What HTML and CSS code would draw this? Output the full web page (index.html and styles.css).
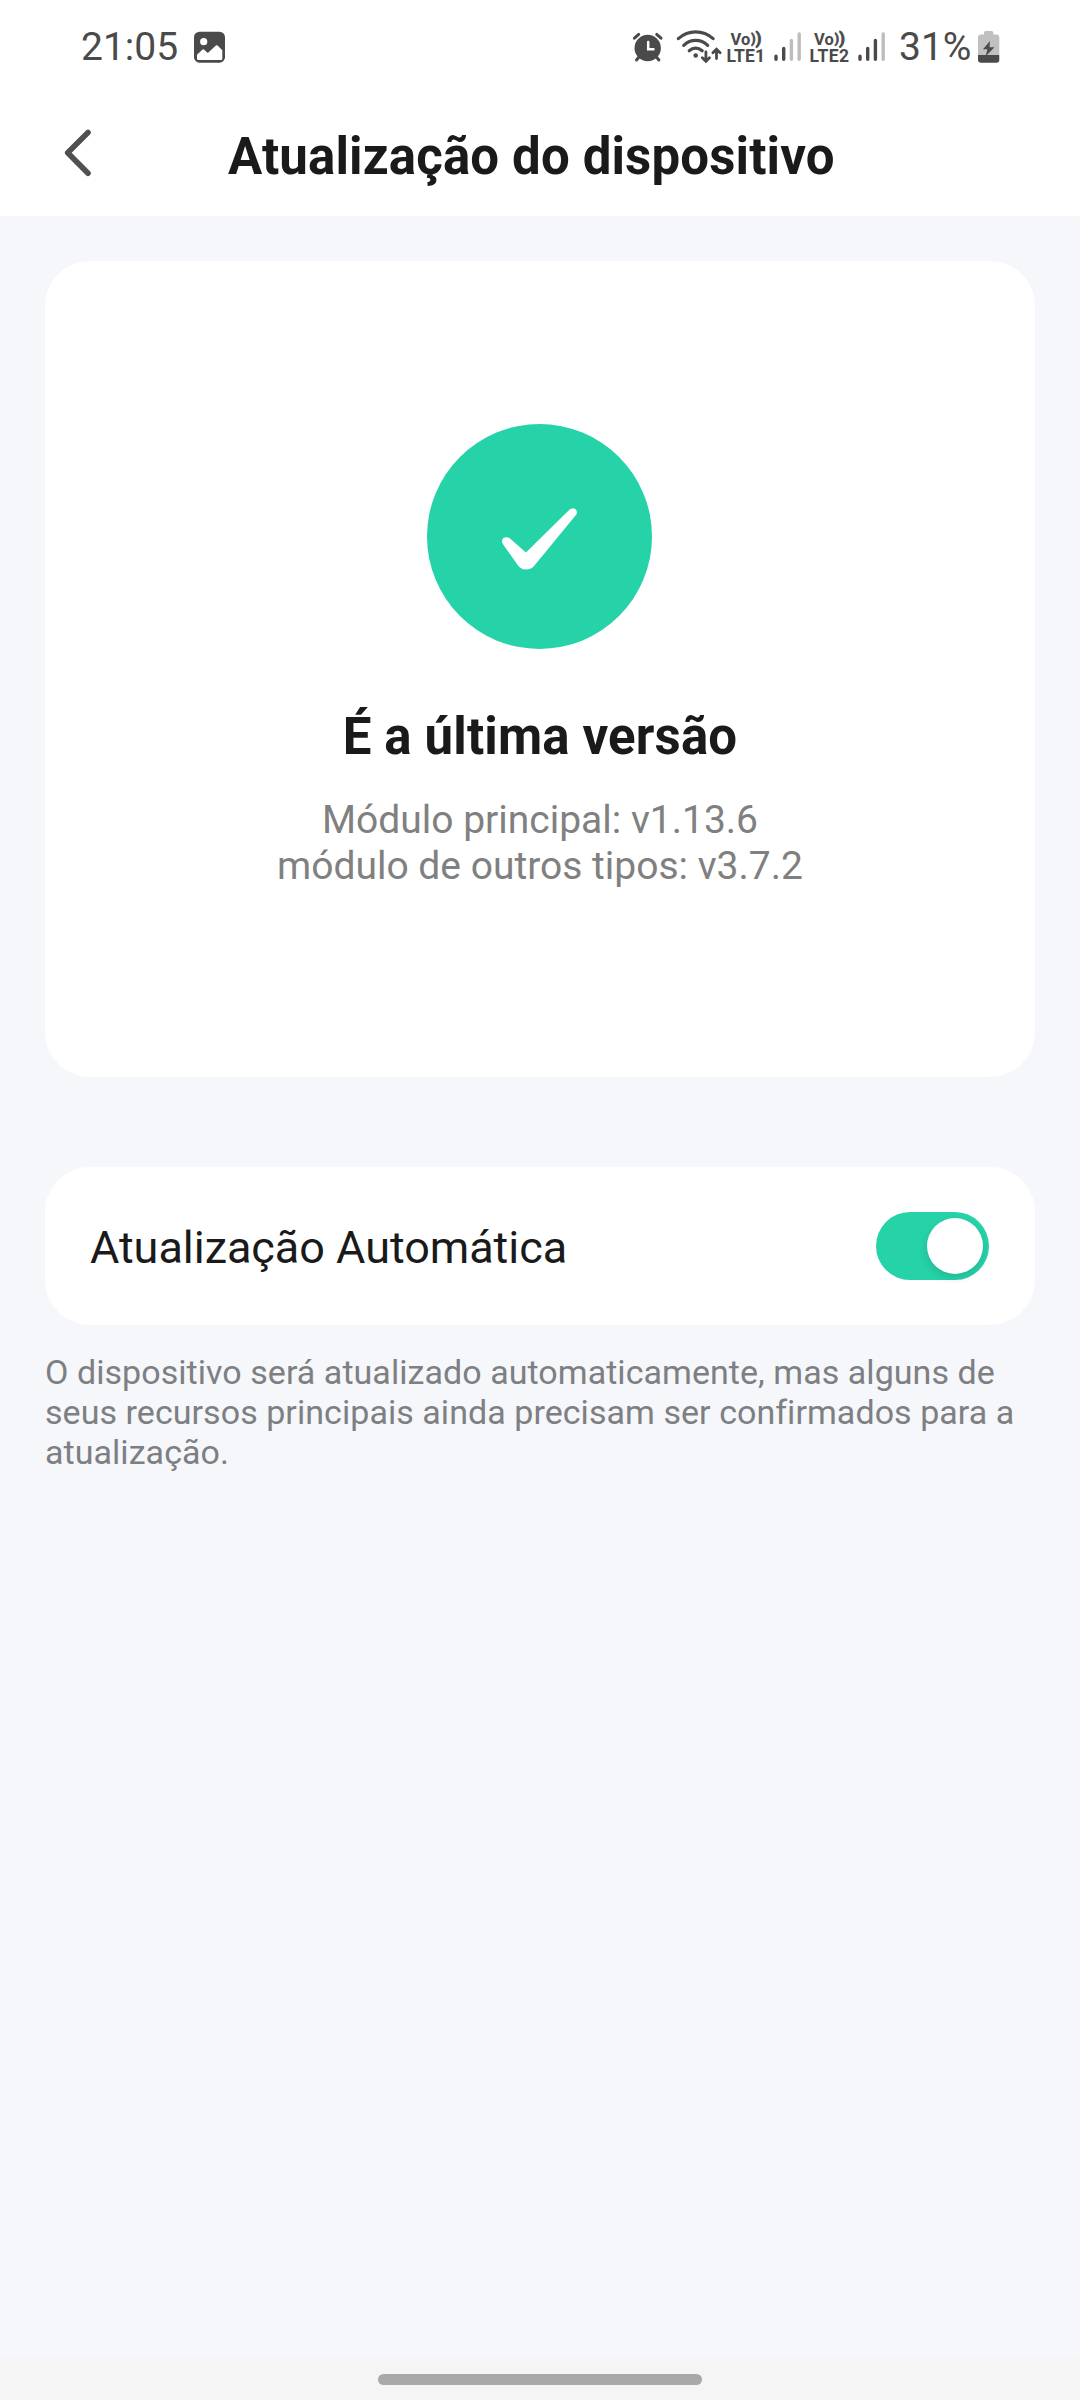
FILE: index.html
```html
<!DOCTYPE html>
<html lang="pt">
<head>
<meta charset="utf-8">
<title>Atualização do dispositivo</title>
<link rel="stylesheet" href="styles.css">
</head>
<body>
<div class="screen">
  <div class="status">
    <span class="clock">21:05</span>
    <svg class="photo" width="32" height="92" viewBox="194 0 32 92">
      <rect x="194" y="31.7" width="31" height="31" rx="5.5" fill="#4a4a4a"/>
      <circle cx="203.7" cy="41.7" r="3.6" fill="#fff"/>
      <path d="M197 54.8L202.6 49.6Q203.4 49 204.2 49.7L207.8 53L215.9 45.5Q216.8 44.8 217.6 45.6L222.3 50.3V58.5Q222.3 60 220.8 60H198.500Q197 60 197 58.500Z" fill="#fff"/>
    </svg>
    <div class="indicators">
      <svg width="40" height="92" viewBox="630 0 40 92" fill="none" stroke="#4a4a4a" stroke-linecap="round">
        <circle cx="647.7" cy="48" r="13.2" fill="#4a4a4a" stroke="none"/>
        <path d="M634.4 38.200L638.700 34.400M661 38.200L656.700 34.400" stroke-width="3"/>
        <path d="M639 57L636.500 60M656.400 57L658.900 60" stroke-width="3"/>
        <path d="M648.200 42V49.200H653.500" stroke="#fff" stroke-width="2.500"/>
      </svg>
      <svg width="54" height="92" viewBox="670 0 54 92" fill="none" stroke="#4a4a4a" stroke-width="3.200" stroke-linecap="round">
        <path d="M678.300 38.600Q686 31.800 695.700 31.800T713.100 38.600M683.700 45.300Q689 40.400 695.700 40.400T707.700 45.300M689.200 50.800Q692.200 48.200 695.700 48.200T702.200 50.800"/>
        <circle cx="695.700" cy="55.500" r="2.300" fill="#4a4a4a" stroke="none"/>
        <path d="M705.900 52V61M702.300 57.800L705.900 61.300L709.500 57.800M716.500 58.500V49.500M712.900 52.700L716.500 49.200L720.100 52.700" stroke-width="2.800"/>
      </svg>
      <svg class="volte" width="44" height="92" viewBox="724 0 44 92">
        <text x="730.500" y="44.500" font-size="16.500">Vo<tspan class="wave" x="751.300" y="42.500" font-size="12">)</tspan><tspan class="wave" x="755.500" y="44" font-size="17">)</tspan></text>
        <text x="726.500" y="62" font-size="17.500" textLength="38.500">LTE1</text>
      </svg>
      <svg width="38" height="92" viewBox="768 0 38 92" fill="none" stroke="#4a4a4a" stroke-width="3.400" stroke-linecap="round">
        <path d="M776 56.300V59.200M783.700 48.500V59.200"/>
        <path d="M791.400 40.500V59.200M799.200 34V59.200" stroke="#bdbdbd"/>
      </svg>
      <svg class="volte" width="46" height="92" viewBox="806 0 46 92">
        <text x="814" y="44.500" font-size="16.500">Vo<tspan class="wave" x="834.800" y="42.500" font-size="12">)</tspan><tspan class="wave" x="839" y="44" font-size="17">)</tspan></text>
        <text x="809.500" y="62" font-size="17.500" textLength="39.500">LTE2</text>
      </svg>
      <svg width="46" height="92" viewBox="852 0 46 92" fill="none" stroke="#4a4a4a" stroke-width="3.400" stroke-linecap="round">
        <path d="M860 56.300V59.200M867.700 48.500V59.200M875.400 40.500V59.200"/>
        <path d="M883.200 34V59.200" stroke="#bdbdbd"/>
      </svg>
      <span class="percent">31%</span>
      <svg width="24" height="92" viewBox="976 0 24 92">
        <path d="M984 34.500V32.500Q984 31 985.500 31H991.800Q993.300 31 993.300 32.500V34.500H996.300Q999.300 34.500 999.300 37.500V55H978V37.500Q978 34.500 981 34.500Z" fill="#c0c0c0"/>
        <path d="M978 55H999.300V59.700Q999.300 62.700 996.300 62.700H981Q978 62.700 978 59.700Z" fill="#4a4a4a"/>
        <path d="M990 41L983 49.200H987.500L985.500 56.500L994.500 47.200H989.500Z" fill="#4a4a4a"/>
      </svg>
    </div>
  </div>

  <header class="header">
    <svg class="back" width="32" height="50" viewBox="62 128 32 50" fill="none" stroke="#505050" stroke-width="5.600" stroke-linecap="round" stroke-linejoin="round">
      <path d="M88 132.500L67.700 152.700L88 173.200"/>
    </svg>
    <h1 class="title">Atualização do dispositivo</h1>
  </header>

  <main class="content">
    <section class="card version">
      <svg class="done" width="225" height="225" viewBox="51 71.500 675 675">
        <circle cx="388.500" cy="409" r="337.500" fill="#26d2a8"/>
        <path d="M300 415L348 457L478 329Q486 321 495 326Q504 333 499 343L374 495Q364 508 348 508Q333 508 324 496L278 431Q273 420 281 413Q290 408 300 415Z" fill="#fff"/>
      </svg>
      <h2 class="headline">É a última versão</h2>
      <p class="modules">Módulo principal: v1.13.6<br>módulo de outros tipos: v3.7.2</p>
    </section>
    <section class="card auto">
      <span class="label">Atualização Automática</span>
      <span class="toggle"><span class="knob"></span></span>
    </section>
    <p class="note">O dispositivo será atualizado automaticamente, mas alguns de seus recursos principais ainda precisam ser confirmados para a atualização.</p>
  </main>

  <footer class="nav"><span class="handle"></span></footer>
</div>
</body>
</html>
```
FILE: styles.css
```css
* { box-sizing: border-box; }

body, h1, h2, p { margin: 0; }

body { font-family: Roboto, sans-serif; }

svg { display: block; flex: none; }

.screen {
  display: flex;
  flex-direction: column;
  width: 1080px;
  height: 2400px;
  background: #f5f7fb;
}

.status {
  display: flex;
  height: 92px;
  padding: 0 80px 0 81px;
  background: #fff;
  color: #4a4a4a;
  font-size: 39px;
  line-height: 46px;
}

.clock { width: 113px; padding-top: 24px; }

.indicators { display: flex; margin-left: auto; }

.percent { width: 78px; padding: 24px 0 0 1px; }

.volte { fill: #4a4a4a; font-weight: 700; }

.wave { stroke: #4a4a4a; stroke-width: 0.8px; }

.header {
  display: flex;
  align-items: flex-start;
  height: 124px;
  padding: 35px 62px 0;
  background: #fff;
}

.back { margin-top: 1px; }

.title {
  margin-left: 134px;
  color: #1a1a1a;
  font-size: 51px;
  font-weight: 700;
  letter-spacing: 0.13px;
  line-height: 60px;
  white-space: nowrap;
}

.content { flex: 1; padding: 45px 45px 0; }

.card { background: #fff; border-radius: 45px; }

.version {
  display: flex;
  flex-direction: column;
  align-items: center;
  height: 816px;
  padding-top: 163px;
}

.done { margin-right: 2px; }

.headline {
  margin-top: 58px;
  color: #1a1a1a;
  font-size: 51px;
  font-weight: 700;
  letter-spacing: 0.13px;
  line-height: 60px;
}

.modules {
  margin-top: 30px;
  color: #808080;
  font-size: 39px;
  line-height: 46px;
  text-align: center;
}

.auto {
  display: flex;
  align-items: center;
  justify-content: space-between;
  height: 158px;
  margin-top: 90px;
  padding: 0 46px 0 45px;
}

.label {
  padding-top: 3px;
  color: #1a1a1a;
  font-size: 45px;
  letter-spacing: -0.04px;
  line-height: 53px;
}

.toggle {
  display: flex;
  align-items: center;
  justify-content: flex-end;
  width: 113px;
  height: 68px;
  padding: 0 6px;
  border-radius: 34px;
  background: #26d2a8;
}

.knob {
  width: 56px;
  height: 56px;
  border-radius: 50%;
  background: #fff;
  box-shadow: 0 4px 8px rgba(0, 0, 0, 0.12);
}

.note {
  margin-top: 27px;
  color: #7d7f82;
  font-size: 34px;
  letter-spacing: 0.05px;
  line-height: 40px;
}

.nav {
  display: flex;
  justify-content: center;
  height: 42px;
  padding-top: 16px;
  background: #f5f5f5;
}

.handle {
  width: 324px;
  height: 11px;
  border-radius: 6px;
  background: #a9a9a9;
}
```
